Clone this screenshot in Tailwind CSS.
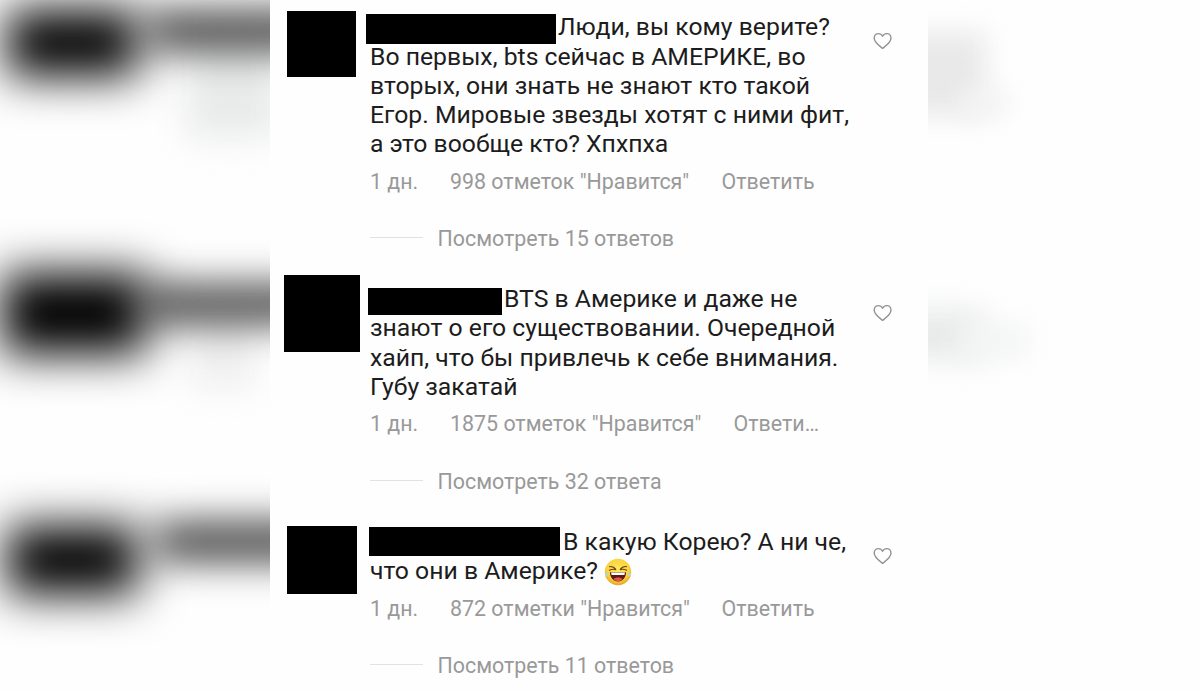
<!DOCTYPE html>
<html lang="ru">
<head>
    <meta charset="UTF-8">
    <meta name="viewport" content="width=device-width, initial-scale=1.0">
    <title>Комментарии</title>
    <script src="https://cdn.jsdelivr.net/npm/@tailwindcss/browser@4"></script>
</head>
<body class="flex h-[691px] w-[1200px] overflow-hidden bg-[#fefefe] font-[Roboto,sans-serif]">
    <!-- Blurred backdrop, left -->
    <div class="relative w-[270px] shrink-0 overflow-hidden bg-[#fefefe]">
        <div class="absolute left-[185px] top-[40px] h-[98px] w-[95px] bg-[#e9ebea] blur-[17px]"></div>
        <div class="absolute left-[148px] top-[15px] h-[31px] w-[240px] bg-[#111] blur-[21px]"></div>
        <div class="absolute left-[7px] top-[10px] h-[66px] w-[131px] bg-black blur-[23px]"></div>

        <div class="absolute left-[190px] top-[310px] h-[78px] w-[65px] bg-[#efeff0] blur-[16px]"></div>
        <div class="absolute left-[145px] top-[289px] h-[30px] w-[240px] bg-[#111] blur-[21px]"></div>
        <div class="absolute left-[2px] top-[273px] h-[81px] w-[144px] bg-black blur-[23px]"></div>

        <div class="absolute left-[156px] top-[526px] h-[31px] w-[240px] bg-[#111] blur-[21px]"></div>
        <div class="absolute left-[7px] top-[526px] h-[68px] w-[131px] bg-black blur-[23px]"></div>
    </div>

    <!-- Comments -->
    <main class="w-[658px] shrink-0 bg-[#fefefe] pt-[13px]">
        <article class="flex pb-[34px]">
            <div class="-mt-[2px] ml-[17px] h-[66px] w-[69px] shrink-0 bg-black"></div>
            <div class="ml-[14px] w-[503px] shrink-0 whitespace-nowrap">
                <div class="-mt-[0.6px] text-[24.75px] leading-[29.1px] text-[#1c1c1c]">
                    <div class="flex h-[29.1px]">
                        <div class="-ml-[4px] mt-[1.6px] h-[30px] w-[190px] shrink-0 bg-black"></div>
                        <span class="ml-[2px]">Люди, вы кому верите?</span>
                    </div>
                    <p>Во первых, bts сейчас в АМЕРИКЕ, во</p>
                    <p>вторых, они знать не знают кто такой</p>
                    <p>Егор. Мировые звезды хотят с ними фит,</p>
                    <p>а это вообще кто? Хпхпха</p>
                </div>
                <div class="mt-[11.7px] flex text-[21.4px] leading-[24px] text-[#999]">
                    <span class="w-[80px]">1 дн.</span>
                    <span class="w-[271.6px]">998 отметок "Нравится"</span>
                    <span>Ответить</span>
                </div>
                <div class="mt-[33.4px] flex text-[21.4px] leading-[24px] text-[#999]">
                    <div class="mr-[14.5px] mt-[10px] h-px w-[53px] bg-[#e2e2e2]"></div>
                    <span>Посмотреть 15 ответов</span>
                </div>
            </div>
            <svg class="mt-[19px] h-[18px] w-[20px] shrink-0" viewBox="0 0 20 18" fill="none" stroke="#929292" stroke-width="1.4" stroke-linejoin="round">
                <path d="M9.6 16.4C7.4 14.6 1.2 10.4 1.2 6.2C1.2 3.4 3.2 1.6 5.4 1.6C7.3 1.6 8.8 2.7 9.6 4.3C10.4 2.7 11.9 1.6 13.8 1.6C16 1.6 18 3.4 18 6.2C18 10.4 11.8 14.6 9.6 16.4Z"/>
            </svg>
        </article>

        <article class="flex pb-[34px]">
            <div class="-mt-[10px] ml-[14px] h-[77px] w-[76px] shrink-0 bg-black"></div>
            <div class="ml-[10px] w-[503px] shrink-0 whitespace-nowrap">
                <div class="-mt-[0.6px] text-[24.75px] leading-[29.1px] text-[#1c1c1c]">
                    <div class="flex h-[29.1px]">
                        <div class="-ml-[2px] mt-[3.6px] h-[27px] w-[134px] shrink-0 bg-black"></div>
                        <span class="ml-[2px]">BTS в Америке и даже не</span>
                    </div>
                    <p>знают о его существовании. Очередной</p>
                    <p>хайп, что бы привлечь к себе внимания.</p>
                    <p>Губу закатай</p>
                </div>
                <div class="mt-[11.7px] flex text-[21.4px] leading-[24px] text-[#999]">
                    <span class="w-[80px]">1 дн.</span>
                    <span class="w-[283.6px]">1875 отметок "Нравится"</span>
                    <span>Ответи…</span>
                </div>
                <div class="mt-[33.4px] flex text-[21.4px] leading-[24px] text-[#999]">
                    <div class="mr-[14.5px] mt-[10px] h-px w-[53px] bg-[#e2e2e2]"></div>
                    <span>Посмотреть 32 ответа</span>
                </div>
            </div>
            <svg class="mt-[19px] h-[18px] w-[20px] shrink-0" viewBox="0 0 20 18" fill="none" stroke="#929292" stroke-width="1.4" stroke-linejoin="round">
                <path d="M9.6 16.4C7.4 14.6 1.2 10.4 1.2 6.2C1.2 3.4 3.2 1.6 5.4 1.6C7.3 1.6 8.8 2.7 9.6 4.3C10.4 2.7 11.9 1.6 13.8 1.6C16 1.6 18 3.4 18 6.2C18 10.4 11.8 14.6 9.6 16.4Z"/>
            </svg>
        </article>

        <article class="flex">
            <div class="-mt-[2px] ml-[17px] h-[68px] w-[70px] shrink-0 bg-black"></div>
            <div class="ml-[13px] w-[503px] shrink-0 whitespace-nowrap">
                <div class="-mt-[0.6px] text-[24.75px] leading-[29.1px] text-[#1c1c1c]">
                    <div class="flex h-[29.1px]">
                        <div class="-ml-[1px] -mt-[0.4px] h-[29px] w-[191px] shrink-0 bg-black"></div>
                        <span class="ml-[3px]">В какую Корею? А ни че,</span>
                    </div>
                    <div class="flex h-[29.1px]">
                        <span>что они в Америке?</span>
                        <svg class="ml-[6px] mt-[1.5px] h-[28px] w-[28px]" viewBox="0 0 28 28">
                            <defs>
                                <radialGradient id="face" cx="50%" cy="40%" r="60%">
                                    <stop offset="0" stop-color="#ffe95c"/>
                                    <stop offset="0.7" stop-color="#fbd23c"/>
                                    <stop offset="1" stop-color="#e5a32a"/>
                                </radialGradient>
                            </defs>
                            <circle cx="14" cy="14" r="13.2" fill="url(#face)"/>
                            <path d="M5.6 8.6C8 8.4 10.4 9.4 11.8 11.6C9.6 11 7.4 11.2 5.4 12.2M22.4 8.6C20 8.4 17.6 9.4 16.2 11.6C18.4 11 20.6 11.2 22.6 12.2" fill="none" stroke="#6b4312" stroke-width="1.1" stroke-linecap="round" stroke-linejoin="round"/>
                            <path d="M6 14.2H22C22 19.6 18.6 23.4 14 23.4S6 19.6 6 14.2Z" fill="#5d1a12"/>
                            <path d="M7 14.6H21L20.4 17H7.6Z" fill="#fff"/>
                            <path d="M9.4 21C11.4 18.9 16.6 18.9 18.6 21C16.2 23.8 11.8 23.8 9.4 21Z" fill="#e5554d"/>
                            <path d="M4.4 14C2 14.6 .4 16.4 1 18C2.2 19.4 4.2 17.4 4.4 14ZM23.6 14C26 14.6 27.6 16.4 27 18C25.8 19.4 23.8 17.4 23.6 14Z" fill="#b4d6d6"/>
                        </svg>
                    </div>
                </div>
                <div class="mt-[11.7px] flex text-[21.4px] leading-[24px] text-[#999]">
                    <span class="w-[80px]">1 дн.</span>
                    <span class="w-[271.6px]">872 отметки "Нравится"</span>
                    <span>Ответить</span>
                </div>
                <div class="mt-[33.4px] flex text-[21.4px] leading-[24px] text-[#999]">
                    <div class="mr-[14.5px] mt-[10px] h-px w-[53px] bg-[#e2e2e2]"></div>
                    <span>Посмотреть 11 ответов</span>
                </div>
            </div>
            <svg class="mt-[19px] h-[18px] w-[20px] shrink-0" viewBox="0 0 20 18" fill="none" stroke="#929292" stroke-width="1.4" stroke-linejoin="round">
                <path d="M9.6 16.4C7.4 14.6 1.2 10.4 1.2 6.2C1.2 3.4 3.2 1.6 5.4 1.6C7.3 1.6 8.8 2.7 9.6 4.3C10.4 2.7 11.9 1.6 13.8 1.6C16 1.6 18 3.4 18 6.2C18 10.4 11.8 14.6 9.6 16.4Z"/>
            </svg>
        </article>
    </main>

    <!-- Blurred backdrop, right -->
    <div class="relative w-[272px] shrink-0 overflow-hidden bg-[#fefefe]">
        <div class="absolute -left-[60px] top-[32px] h-[84px] w-[118px] bg-[#e9e9e9] blur-[13px]"></div>
        <div class="absolute left-[30px] top-[90px] h-[26px] w-[50px] bg-[#f3f3f3] blur-[11px]"></div>
        <div class="absolute -left-[60px] top-[310px] h-[50px] w-[115px] bg-[#e8eae9] blur-[14px]"></div>
        <div class="absolute left-[30px] top-[324px] h-[34px] w-[68px] bg-[#f3f4f4] blur-[12px]"></div>
    </div>
</body>
</html>
